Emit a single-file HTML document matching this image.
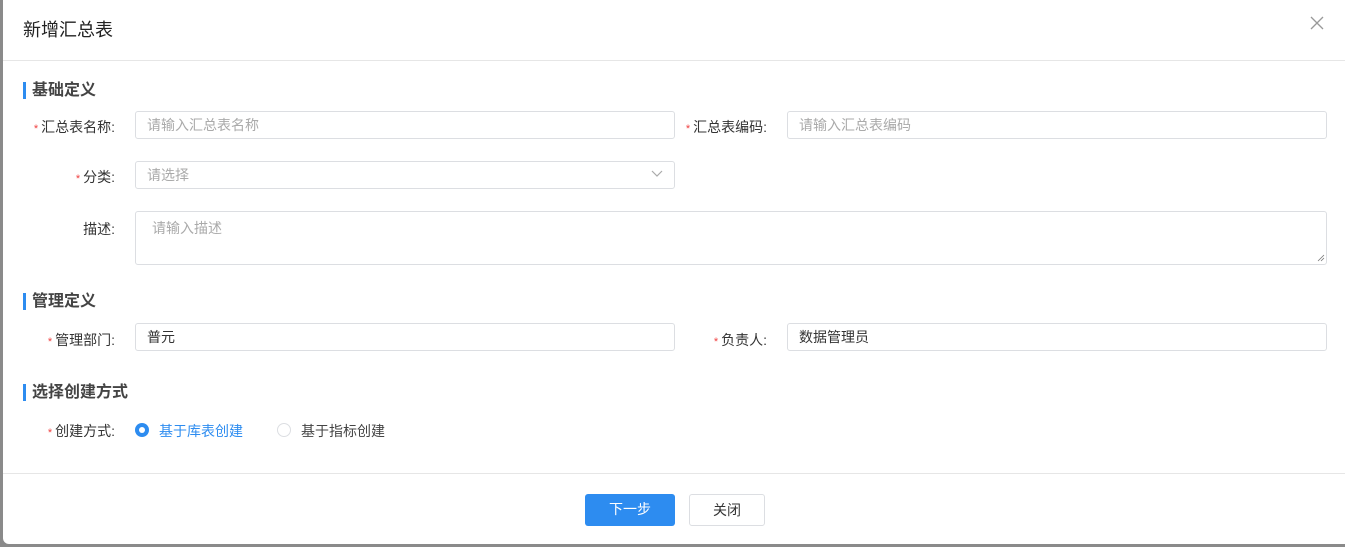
<!DOCTYPE html>
<html><head><meta charset="utf-8"><style>
*{box-sizing:border-box;margin:0;padding:0}
body{width:1345px;height:547px;background:#8a8a8a;font-family:"Liberation Sans","Noto Sans CJK SC",sans-serif;font-size:14px;color:#333;position:relative;overflow:hidden}
.modal{position:absolute;left:3px;top:0;width:1345px;height:544px;background:#fff;border-radius:0 0 0 6px}
.abs{position:absolute}
.title{left:20px;top:16px;font-size:18px;color:#222}
.hr{left:0;width:1345px;height:1px;background:#e6e6e6}
.sec{font-size:16px;font-weight:600;color:#444;padding-left:6px;border-left:3px solid #2d8cf0;line-height:17px;left:20px}
.lab{text-align:right;width:112px;left:0;color:#333}
.lab i{color:#f04040;font-style:normal;font-size:11px;margin-right:3px}
.in{border:1px solid #dcdee2;border-radius:3px;height:28px;line-height:26px;padding-left:11px;color:#333}
.ph{color:#aaa}
.btn{height:32px;line-height:30px;text-align:center;border-radius:3px;font-size:14px}
</style></head><body>
<div class="modal">
<div class="abs title">新增汇总表</div>
<svg class="abs" style="left:1307px;top:16px" width="14" height="14"><path d="M1 1L13 13M13 1L1 13" stroke="#999" stroke-width="1.3"/></svg>
<div class="abs hr" style="top:60px"></div>

<div class="abs sec" style="top:82px">基础定义</div>
<div class="abs lab" style="top:117px"><i>*</i>汇总表名称:</div>
<div class="abs in ph" style="left:132px;top:111px;width:540px">请输入汇总表名称</div>
<div class="abs lab" style="top:117px;left:652px"><i>*</i>汇总表编码:</div>
<div class="abs in ph" style="left:784px;top:111px;width:540px">请输入汇总表编码</div>
<div class="abs lab" style="top:167px"><i>*</i>分类:</div>
<div class="abs in ph" style="left:132px;top:161px;width:540px">请选择</div>
<svg class="abs" style="left:648px;top:170px" width="12" height="8"><path d="M1 1L6 6L11 1" stroke="#aaa" fill="none" stroke-width="1.2"/></svg>
<div class="abs lab" style="top:219px">描述:</div>
<div class="abs in ph" style="left:132px;top:211px;width:1192px;height:54px;padding-left:16px;line-height:32px">请输入描述</div>
<svg class="abs" style="left:1314px;top:254px" width="8" height="8"><path d="M1 7L7 1M4 7L7 4" stroke="#777" stroke-width="0.8"/></svg>

<div class="abs sec" style="top:293px">管理定义</div>
<div class="abs lab" style="top:330px"><i>*</i>管理部门:</div>
<div class="abs in" style="left:132px;top:323px;width:540px">普元</div>
<div class="abs lab" style="top:330px;left:652px"><i>*</i>负责人:</div>
<div class="abs in" style="left:784px;top:323px;width:540px">数据管理员</div>

<div class="abs sec" style="top:384px">选择创建方式</div>
<div class="abs lab" style="top:421px"><i>*</i>创建方式:</div>
<div class="abs" style="left:132px;top:423px;width:14px;height:14px;border-radius:50%;background:#2d8cf0"><div style="margin:4px;width:6px;height:6px;border-radius:50%;background:#fff"></div></div>
<div class="abs" style="left:156px;top:421px;color:#2d8cf0">基于库表创建</div>
<div class="abs" style="left:274px;top:423px;width:14px;height:14px;border-radius:50%;border:1px solid #dcdee2"></div>
<div class="abs" style="left:298px;top:421px;color:#444">基于指标创建</div>

<div class="abs hr" style="top:473px"></div>
<div class="abs btn" style="left:582px;top:494px;width:90px;background:#2d8cf0;color:#fff">下一步</div>
<div class="abs btn" style="left:686px;top:494px;width:76px;border:1px solid #dcdee2;color:#333">关闭</div>
</div>
</body></html>
